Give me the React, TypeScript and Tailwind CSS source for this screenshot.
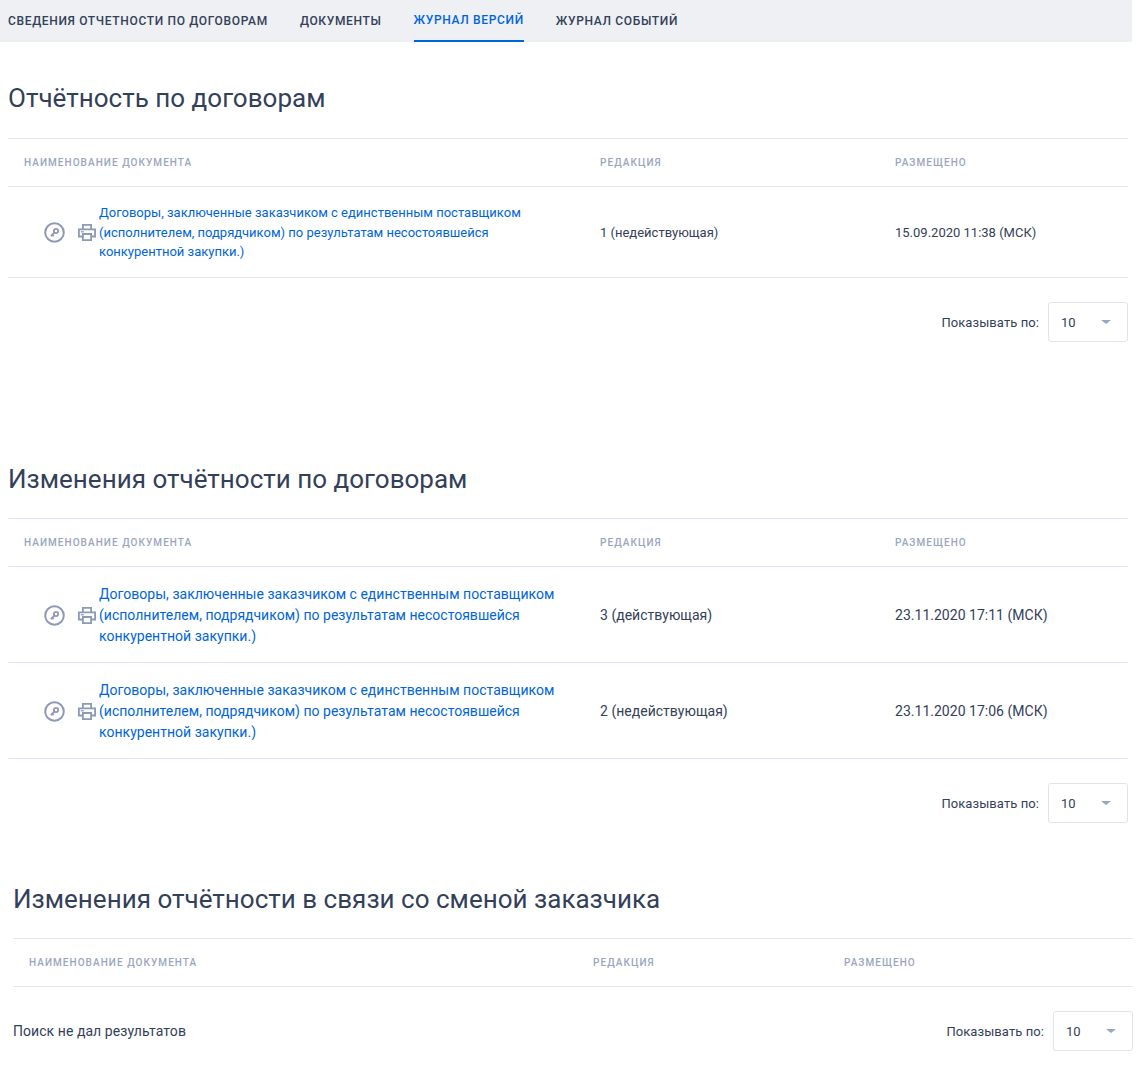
const docTitle =
  "Договоры, заключенные заказчиком с единственным поставщиком (исполнителем, подрядчиком) по результатам несостоявшейся конкурентной закупки.)"

function KeyIcon() {
  return (
    <svg width="21" height="21" viewBox="0 0 21 21" fill="none" className="shrink-0">
      <circle cx="10.5" cy="10.5" r="9.3" stroke="#8d99b5" strokeWidth="2" />
      <circle cx="12" cy="9" r="2.1" stroke="#8d99b5" strokeWidth="1.8" />
      <path d="M10.5 10.5l-3.6 3.7M8.3 12.9l1.3 1.3" stroke="#8d99b5" strokeWidth="1.8" />
    </svg>
  )
}

function PrintIcon() {
  return (
    <svg width="18" height="17" viewBox="0 0 18 17" fill="none" className="shrink-0">
      <path d="M4.9 5V.9h8.2V5" stroke="#8d99b5" strokeWidth="1.8" />
      <path d="M4.5 12.5H.9V5.4h16.2v7.1h-3.6" stroke="#8d99b5" strokeWidth="1.8" />
      <path d="M4.9 10h8.2v6.1H4.9z" stroke="#8d99b5" strokeWidth="1.8" />
      <path d="M2.8 7.8h3" stroke="#8d99b5" strokeWidth="1.3" />
    </svg>
  )
}

function PageSize() {
  return (
    <div className="flex items-center">
      <span className="text-[13px] tracking-[0.08px] text-[#334059] mr-[9px] pt-[1px]">Показывать по:</span>
      <div className="w-[80px] h-[40px] border border-[#dfe3ee] rounded-[3px] flex items-center justify-between pl-[12px] pr-[16px] text-[13px] text-[#334059]">
        <span className="pt-[1px]">10</span>
        <span className="w-0 h-0 border-x-[5px] border-x-transparent border-t-[4px] border-t-[#9aa5c1]" />
      </div>
    </div>
  )
}

function TableHead({ cols }: { cols: string }) {
  return (
    <div className={`grid ${cols} h-[49px] border-y border-[#e4e5f2] items-center text-[10px] font-medium uppercase tracking-[1.05px] text-[#9aa5c1]`}>
      <div className="pl-[16px]">Наименование документа</div>
      <div>Редакция</div>
      <div>Размещено</div>
    </div>
  )
}

function Row({ big, edition, placed }: { big?: boolean; edition: string; placed: string }) {
  const size = big ? "text-[14px] leading-[21px] tracking-[0.02px] pt-[1px]" : "text-[13px] leading-[19.5px] pt-[1px]"
  return (
    <div className={`grid grid-cols-[592px_295px_1fr] items-center border-b border-[#e4e5f2] text-[#334059] ${size} ${big ? "h-[96px]" : "h-[91px]"}`}>
      <div className="flex items-center pl-[36px]">
        <KeyIcon />
        <span className="ml-[13px] mr-[3px]">
          <PrintIcon />
        </span>
        <a href="#" className={`text-[#0065dd] ${big ? "w-[470px]" : "w-[440px]"}`}>
          {docTitle}
        </a>
      </div>
      <div>{edition}</div>
      <div>{placed}</div>
    </div>
  )
}

export default function App() {
  const cols = "grid-cols-[592px_295px_1fr]"
  return (
    <div className="w-[1139px] h-[1071px] overflow-hidden bg-white font-['Roboto',sans-serif]">
      <div className="w-[1132px] h-[42px] bg-[#eef0f3] flex gap-[32px] pl-[8px] text-[12px] font-medium uppercase tracking-[0.66px] text-[#334059]">
        <div className="h-full flex items-center">Сведения отчетности по договорам</div>
        <div className="h-full flex items-center">Документы</div>
        <div className="h-full flex items-center text-[#0065dd] border-b-2 border-[#0065dd]">Журнал версий</div>
        <div className="h-full flex items-center">Журнал событий</div>
      </div>

      <section className="px-[8px] w-[1136px]">
        <h2 className="text-[26px] leading-[32px] tracking-[0.01px] text-[#334059] mt-[40px] mb-[24px]">Отчётность по договорам</h2>
        <TableHead cols={cols} />
        <Row edition="1 (недействующая)" placed="15.09.2020 11:38 (МСК)" />
        <div className="flex justify-end mt-[24px]">
          <PageSize />
        </div>
      </section>

      <section className="px-[8px] w-[1136px]">
        <h2 className="text-[26px] leading-[32px] tracking-[0.01px] text-[#334059] mt-[121px] mb-[23px]">Изменения отчётности по договорам</h2>
        <TableHead cols={cols} />
        <Row big edition="3 (действующая)" placed="23.11.2020 17:11 (МСК)" />
        <Row big edition="2 (недействующая)" placed="23.11.2020 17:06 (МСК)" />
        <div className="flex justify-end mt-[24px]">
          <PageSize />
        </div>
      </section>

      <section className="pl-[13px] pr-[6px]">
        <h2 className="text-[26px] leading-[32px] tracking-[0.01px] text-[#334059] mt-[60px] mb-[23px]">Изменения отчётности в связи со сменой заказчика</h2>
        <TableHead cols="grid-cols-[580px_251px_1fr]" />
        <div className="flex items-center justify-between mt-[24px]">
          <span className="text-[14px] tracking-[0.06px] text-[#334059]">Поиск не дал результатов</span>
          <PageSize />
        </div>
      </section>
    </div>
  )
}
